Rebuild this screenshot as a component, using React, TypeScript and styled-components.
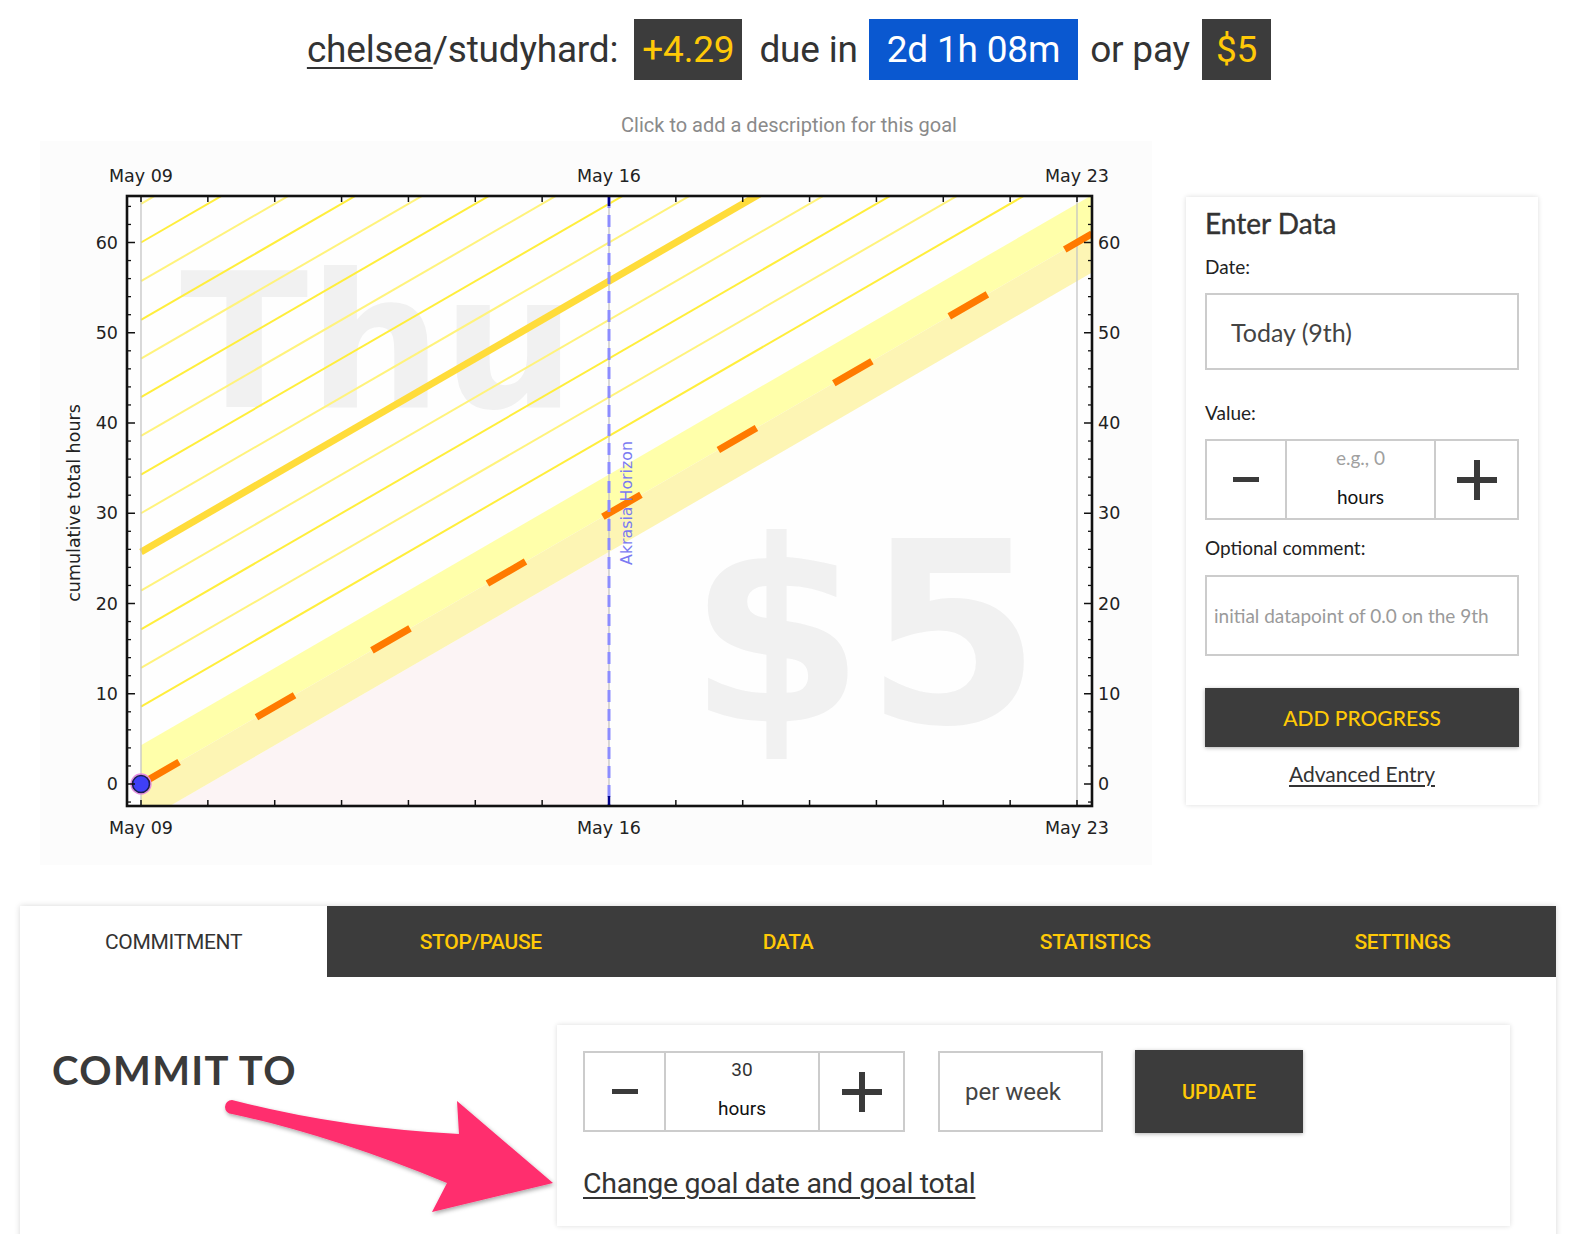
import React from "react";
import styled, { createGlobalStyle } from "styled-components";

const GlobalStyle = createGlobalStyle`
  html, body { margin: 0; padding: 0; background: #ffffff; }
  body { font-family: Roboto, "Liberation Sans", sans-serif; color: #333; }
  * { box-sizing: border-box; }
`;

const Page = styled.div`
  width: 1578px;
  min-height: 1234px;
  overflow: hidden;
`;

const HeaderLine = styled.h1`
  margin: 19px 0 0;
  height: 61px;
  display: flex;
  justify-content: center;
  align-items: center;
  font-family: Roboto, "Liberation Sans", sans-serif;
  font-weight: 400;
  font-size: 37px;
  color: #333;
  letter-spacing: -0.2px;
`;

const UserLink = styled.a`
  color: #333;
  text-decoration: underline;
  text-underline-offset: 5px;
  text-decoration-thickness: 2px;
`;

const Word = styled.span<{ $ml?: number; $mr?: number }>`
  margin-left: ${(p) => p.$ml ?? 0}px;
  margin-right: ${(p) => p.$mr ?? 0}px;
  white-space: pre;
`;

const Pill = styled.span<{ $blue?: boolean; $pad: number }>`
  display: inline-flex;
  align-items: center;
  height: 61px;
  padding: 0 ${(p) => p.$pad}px;
  background: ${(p) => (p.$blue ? "#0a58d0" : "#3c3c3c")};
  color: ${(p) => (p.$blue ? "#ffffff" : "#ffc907")};
`;

const Description = styled.div`
  margin-top: 33px;
  text-align: center;
  font-size: 20px;
  line-height: 24px;
  color: #8a8a8a;
`;

const TopRow = styled.div`
  display: flex;
  align-items: flex-start;
  gap: 34px;
  padding: 0 40px;
  margin-top: 4px;
`;

const ChartFrame = styled.div`
  width: 1112px;
  height: 724px;
  background: #fcfcfc;
  flex: none;
  svg { display: block; }
`;

const Panel = styled.aside`
  width: 352px;
  margin-top: 56px;
  background: #fff;
  box-shadow: 0 0 5px rgba(0, 0, 0, 0.14);
  padding: 10px 19px 19px;
  font-family: Lato, "Open Sans", sans-serif;
  color: #333;
`;

const PanelTitle = styled.h2`
  margin: 0;
  font-size: 28px;
  line-height: 32px;
  font-weight: 400;
  color: #333;
  -webkit-text-stroke: 0.4px #333;
`;

const FieldLabel = styled.div<{ $mt: number }>`
  margin-top: ${(p) => p.$mt}px;
  font-size: 19px;
  line-height: 24px;
  color: #222;
`;

const TextBox = styled.div<{ $mt: number; $h: number; $size: number; $color: string; $pl: number }>`
  margin-top: ${(p) => p.$mt}px;
  height: ${(p) => p.$h}px;
  border: 2px solid #cccccc;
  display: flex;
  align-items: center;
  padding-left: ${(p) => p.$pl}px;
  font-size: ${(p) => p.$size}px;
  color: ${(p) => p.$color};
  white-space: nowrap;
`;

const StepperBox = styled.div<{ $mt?: number; $w: string; $cols: string }>`
  margin-top: ${(p) => p.$mt ?? 0}px;
  width: ${(p) => p.$w};
  height: 81px;
  border: 2px solid #cccccc;
  display: grid;
  grid-template-columns: ${(p) => p.$cols};
  flex: none;
`;

const StepCell = styled.div`
  display: flex;
  align-items: center;
  justify-content: center;
`;

const ValueCell = styled.div<{ $font: string }>`
  display: flex;
  flex-direction: column;
  align-items: center;
  justify-content: space-between;
  padding: 5px 0 9px;
  border-left: 2px solid #cccccc;
  border-right: 2px solid #cccccc;
  font-family: ${(p) => p.$font};
  font-size: 19px;
  line-height: 24px;
`;

const ValueTop = styled.span<{ $muted?: boolean }>`
  color: ${(p) => (p.$muted ? "#a0a0a0" : "#333")};
`;

const ValueUnit = styled.span`
  color: #111;
`;

const MinusBar = styled.span`
  display: block;
  width: 26px;
  height: 5px;
  background: #3a3a3a;
`;

const PlusMark = styled.span`
  position: relative;
  display: block;
  width: 40px;
  height: 40px;
  &::before, &::after {
    content: "";
    position: absolute;
    background: #3a3a3a;
  }
  &::before { left: 0; right: 0; top: 17px; height: 6px; }
  &::after { top: 0; bottom: 0; left: 17px; width: 6px; }
`;

const DarkButton = styled.button<{ $w: string; $h: number; $mt?: number; $ml?: number; $font: string; $size: number }>`
  margin-top: ${(p) => p.$mt ?? 0}px;
  margin-left: ${(p) => p.$ml ?? 0}px;
  width: ${(p) => p.$w};
  height: ${(p) => p.$h}px;
  flex: none;
  border: none;
  background: #3c3c3c;
  color: #ffc907;
  font-family: ${(p) => p.$font};
  font-size: ${(p) => p.$size}px;
  font-weight: 500;
  box-shadow: 0 1px 4px rgba(0, 0, 0, 0.3);
  cursor: pointer;
`;

const AdvancedLink = styled.a`
  display: block;
  margin-top: 15px;
  text-align: center;
  font-size: 21px;
  line-height: 24px;
  color: #333;
  text-decoration: underline;
  text-underline-offset: 3px;
`;

const TabCard = styled.section`
  margin: 41px 22px 0 20px;
  background: #fff;
  box-shadow: 0 0 6px rgba(0, 0, 0, 0.16);
`;

const TabBar = styled.nav`
  display: grid;
  grid-template-columns: repeat(5, 1fr);
  height: 71px;
  background: #3c3c3c;
`;

const Tab = styled.div<{ $active?: boolean }>`
  display: flex;
  align-items: center;
  justify-content: center;
  background: ${(p) => (p.$active ? "#ffffff" : "#3c3c3c")};
  color: ${(p) => (p.$active ? "#333333" : "#ffc907")};
  font-size: 21px;
  font-weight: ${(p) => (p.$active ? 400 : 500)};
  letter-spacing: -0.3px;
`;

const TabBody = styled.div`
  position: relative;
  display: flex;
  padding: 48px 46px 30px 32px;
`;

const CommitTitle = styled.h3`
  flex: 1;
  margin: 0;
  padding-top: 21px;
  font-family: Lato, "Open Sans", sans-serif;
  font-weight: 700;
  font-size: 40px;
  line-height: 48px;
  letter-spacing: 1.4px;
  color: #3a3a3a;
`;

const CommitCard = styled.div`
  width: 953px;
  flex: none;
  background: #fff;
  box-shadow: 0 0 5px rgba(0, 0, 0, 0.14);
  padding: 26px 26px 26px;
`;

const CommitRow = styled.div`
  display: flex;
  align-items: flex-start;
`;

const PerWeek = styled.div`
  margin-left: 33px;
  width: 165px;
  height: 81px;
  border: 2px solid #cccccc;
  display: flex;
  align-items: center;
  padding-left: 25px;
  font-size: 24px;
  color: #444;
`;

const ChangeLink = styled.a`
  display: inline-block;
  margin-top: 35px;
  font-size: 28.5px;
  line-height: 32px;
  color: #333;
  text-decoration: underline;
  text-underline-offset: 4px;
  letter-spacing: -0.3px;
`;

const ArrowLayer = styled.svg`
  position: absolute;
  left: 180px;
  top: 113px;
  overflow: visible;
`;

/* ---------- chart geometry ---------- */
const R = 30 / 7;
const DAY = 66.857;
const X0 = 101;
const Y0 = 643;
const VY = 9.025;
const FL = 87;
const FR = 1052;
const FT = 55;
const FB = 665;
const xd = (d: number) => X0 + d * DAY;
const yv = (v: number) => Y0 - VY * v;
const dEnd = (FR - X0) / DAY;

function Chart() {
  const guideKs = [2, 3, 4, 5, 7, 8, 9, 10, 11, 12, 13, 14, 15];
  const majors = [0, 10, 20, 30, 40, 50, 60];
  const minors: number[] = [];
  for (let v = -2; v <= 64; v += 2) if (v % 10 !== 0) minors.push(v);
  const days: number[] = [];
  for (let d = 0; d <= 14; d++) days.push(d);
  const dateLabels: [number, string][] = [
    [0, "May 09"],
    [7, "May 16"],
    [14, "May 23"],
  ];
  const pt = (d: number, v: number) => `${xd(d).toFixed(1)},${yv(v).toFixed(1)}`;
  const fr = (v: number) => `${FR},${yv(v).toFixed(1)}`;
  const tickFont = { fontFamily: '"DejaVu Sans", sans-serif', fontSize: 17.5, fill: "#222" };

  return (
    <svg width={1112} height={724} viewBox="0 0 1112 724">
      <defs>
        <clipPath id="plotClip">
          <rect x={FL} y={FT} width={FR - FL} height={FB - FT} />
        </clipPath>
      </defs>
      <rect x={FL} y={FT} width={FR - FL} height={FB - FT} fill="#fefefe" />
      <g clipPath="url(#plotClip)">
        <text
          x={140}
          y={266}
          fontFamily='"DejaVu Sans", sans-serif'
          fontWeight={700}
          fontSize={188}
          fill="#f1f1f1"
        >
          Thu
        </text>
        <text
          x={648}
          y={581}
          fontFamily='"DejaVu Sans", sans-serif'
          fontWeight={700}
          fontSize={254}
          fill="#f1f1f1"
        >
          $5
        </text>
        <polygon
          points={`${pt(0, -R)} ${pt(7, R * 6)} ${xd(7)},${FB} ${xd(0)},${FB}`}
          fill="#fcf3f4"
          opacity={0.9}
        />
        <polygon
          points={`${pt(0, R)} ${fr(R * (dEnd + 1))} ${fr(R * dEnd)} ${pt(0, 0)}`}
          fill="#ffffaa"
        />
        <polygon
          points={`${pt(0, 0)} ${fr(R * dEnd)} ${fr(R * (dEnd - 1))} ${pt(0, -R)}`}
          fill="#fdf5b4"
        />
        {guideKs.map((k) => (
          <line
            key={k}
            x1={xd(0)}
            y1={yv(R * k)}
            x2={FR}
            y2={yv(R * (dEnd + k))}
            stroke={k % 2 === 0 ? "#ffee3c" : "#fff37c"}
            strokeWidth={2}
          />
        ))}
        <line
          x1={xd(0)}
          y1={yv(R * 6)}
          x2={FR}
          y2={yv(R * (dEnd + 6))}
          stroke="#ffdc3a"
          strokeWidth={7}
        />
        {[0, 7, 14].map((d) => (
          <line key={d} x1={xd(d)} y1={FT} x2={xd(d)} y2={FB} stroke="#c4c4c4" strokeWidth={1.3} />
        ))}
        <line
          x1={xd(0)}
          y1={yv(0)}
          x2={FR}
          y2={yv(R * dEnd)}
          stroke="#ff7a00"
          strokeWidth={7}
          strokeDasharray="44 89.4"
        />
        <line
          x1={xd(7)}
          y1={FT}
          x2={xd(7)}
          y2={FB}
          stroke="#8c8cff"
          strokeWidth={3}
          strokeDasharray="12 7"
        />
        <text
          transform={`translate(${xd(7) + 19},362) rotate(-90)`}
          textAnchor="middle"
          dominantBaseline="middle"
          fontFamily='"DejaVu Sans", sans-serif'
          fontSize={15.8}
          fill="#7a7af2"
        >
          Akrasia Horizon
        </text>
        <circle cx={xd(0)} cy={yv(0)} r={10} fill="none" stroke="#e58be0" strokeWidth={1.3} />
        <circle cx={xd(0)} cy={yv(0)} r={8.5} fill="#3f3ff8" stroke="#1c1c50" strokeWidth={1.6} />
      </g>
      {majors.map((v) => (
        <g key={`M${v}`} stroke="#111" strokeWidth={1.5}>
          <line x1={FL} y1={yv(v)} x2={FL + 8} y2={yv(v)} />
          <line x1={FR - 8} y1={yv(v)} x2={FR} y2={yv(v)} />
        </g>
      ))}
      {minors.map((v) => (
        <g key={`m${v}`} stroke="#111" strokeWidth={1.3}>
          <line x1={FL} y1={yv(v)} x2={FL + 4} y2={yv(v)} />
          <line x1={FR - 4} y1={yv(v)} x2={FR} y2={yv(v)} />
        </g>
      ))}
      {days.map((d) => (
        <g key={`d${d}`} stroke="#111" strokeWidth={1.5}>
          <line x1={xd(d)} y1={FT} x2={xd(d)} y2={FT + 6} />
          <line x1={xd(d)} y1={FB - 6} x2={xd(d)} y2={FB} />
        </g>
      ))}
      <line x1={xd(7)} y1={FT} x2={xd(7)} y2={FT + 10} stroke="#00008a" strokeWidth={2.5} />
      <line x1={xd(7)} y1={FB - 10} x2={xd(7)} y2={FB} stroke="#00008a" strokeWidth={2.5} />
      <rect
        x={FL}
        y={FT}
        width={FR - FL}
        height={FB - FT}
        fill="none"
        stroke="#111"
        strokeWidth={2.6}
      />
      {majors.map((v) => (
        <g key={`l${v}`}>
          <text x={78} y={yv(v)} textAnchor="end" dominantBaseline="central" {...tickFont}>
            {v}
          </text>
          <text x={1058} y={yv(v)} textAnchor="start" dominantBaseline="central" {...tickFont}>
            {v}
          </text>
        </g>
      ))}
      {dateLabels.map(([d, s]) => (
        <g key={s}>
          <text x={xd(d)} y={35} textAnchor="middle" dominantBaseline="central" {...tickFont}>
            {s}
          </text>
          <text x={xd(d)} y={687} textAnchor="middle" dominantBaseline="central" {...tickFont}>
            {s}
          </text>
        </g>
      ))}
      <text
        transform="translate(34,362) rotate(-90)"
        textAnchor="middle"
        dominantBaseline="central"
        {...tickFont}
      >
        cumulative total hours
      </text>
    </svg>
  );
}

function Arrow() {
  return (
    <ArrowLayer width={370} height={130} viewBox="0 0 370 130">
      <defs>
        <filter id="arrowShadow" x="-10%" y="-10%" width="130%" height="140%">
          <feDropShadow dx="1" dy="2" stdDeviation="2" floodColor="#000" floodOpacity="0.35" />
        </filter>
      </defs>
      <path
        d="M 32 10 Q 140 38 259 44 L 257 11 L 353 93 L 232 122 L 247 93 Q 130 45 32 24 A 7 7 0 0 1 32 10 Z"
        fill="#ff2d6e"
        filter="url(#arrowShadow)"
      />
    </ArrowLayer>
  );
}

export default function App() {
  return (
    <Page>
      <GlobalStyle />
      <HeaderLine>
        <UserLink>chelsea</UserLink>
        <Word $mr={16}>/studyhard:</Word>
        <Pill $pad={8}>+4.29</Pill>
        <Word $ml={17} $mr={11}>due in</Word>
        <Pill $blue $pad={18}>2d 1h 08m</Pill>
        <Word $ml={12} $mr={12}>or pay</Word>
        <Pill $pad={14}>$5</Pill>
      </HeaderLine>
      <Description>Click to add a description for this goal</Description>
      <TopRow>
        <ChartFrame>
          <Chart />
        </ChartFrame>
        <Panel>
          <PanelTitle>Enter Data</PanelTitle>
          <FieldLabel $mt={16}>Date:</FieldLabel>
          <TextBox $mt={14} $h={77} $size={25} $color="#444" $pl={24}>
            Today (9th)
          </TextBox>
          <FieldLabel $mt={31}>Value:</FieldLabel>
          <StepperBox $mt={14} $w="100%" $cols="78px 1fr 81px">
            <StepCell>
              <MinusBar />
            </StepCell>
            <ValueCell $font='Lato, "Open Sans", sans-serif'>
              <ValueTop $muted>e.g., 0</ValueTop>
              <ValueUnit>hours</ValueUnit>
            </ValueCell>
            <StepCell>
              <PlusMark />
            </StepCell>
          </StepperBox>
          <FieldLabel $mt={16}>Optional comment:</FieldLabel>
          <TextBox $mt={15} $h={81} $size={19} $color="#9a9a9a" $pl={7}>
            initial datapoint of 0.0 on the 9th
          </TextBox>
          <DarkButton $mt={32} $w="100%" $h={59} $font='Lato, "Open Sans", sans-serif' $size={21}>
            ADD PROGRESS
          </DarkButton>
          <AdvancedLink>Advanced Entry</AdvancedLink>
        </Panel>
      </TopRow>
      <TabCard>
        <TabBar>
          <Tab $active>COMMITMENT</Tab>
          <Tab>STOP/PAUSE</Tab>
          <Tab>DATA</Tab>
          <Tab>STATISTICS</Tab>
          <Tab>SETTINGS</Tab>
        </TabBar>
        <TabBody>
          <CommitTitle>COMMIT TO</CommitTitle>
          <CommitCard>
            <CommitRow>
              <StepperBox $w="322px" $cols="79px 1fr 83px">
                <StepCell>
                  <MinusBar />
                </StepCell>
                <ValueCell $font="Roboto, sans-serif">
                  <ValueTop>30</ValueTop>
                  <ValueUnit>hours</ValueUnit>
                </ValueCell>
                <StepCell>
                  <PlusMark />
                </StepCell>
              </StepperBox>
              <PerWeek>per week</PerWeek>
              <DarkButton $w="168px" $h={83} $ml={32} $mt={-1} $font="Roboto, sans-serif" $size={20}>
                UPDATE
              </DarkButton>
            </CommitRow>
            <ChangeLink>Change goal date and goal total</ChangeLink>
          </CommitCard>
          <Arrow />
        </TabBody>
      </TabCard>
    </Page>
  );
}
